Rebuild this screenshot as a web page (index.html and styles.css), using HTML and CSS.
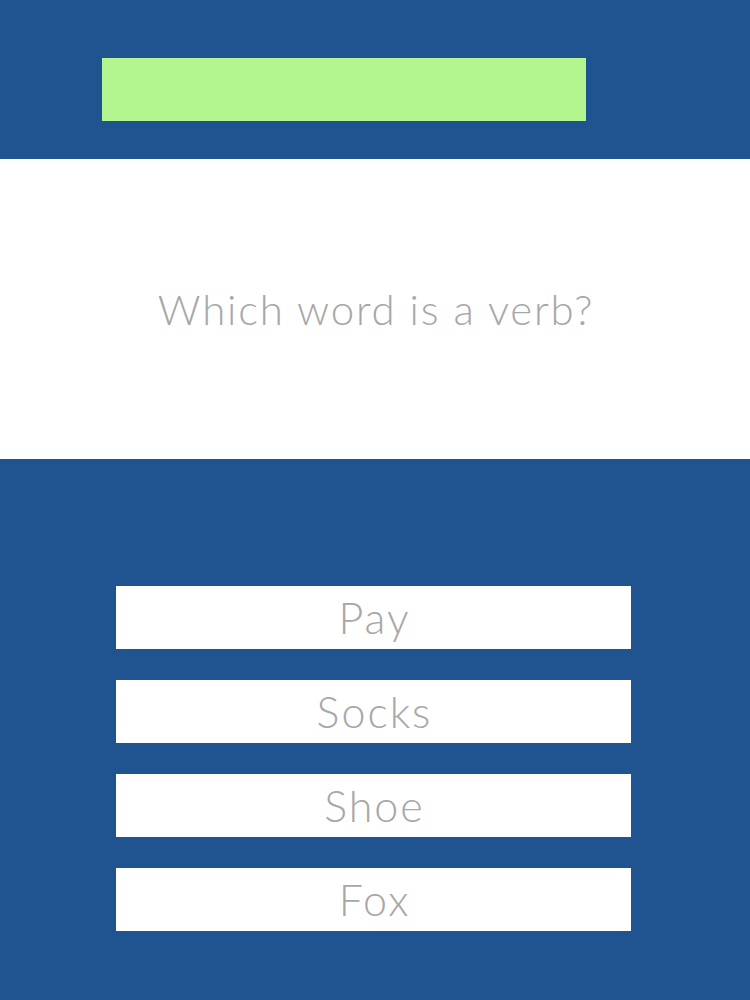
FILE: index.html
```html
<!DOCTYPE html>
<html>
<head>
<meta charset="utf-8">
<link rel="stylesheet" href="styles.css">
</head>
<body>
<header class="top">
  <div class="progress"></div>
</header>
<section class="question">
  <p class="question-text">Which word is a verb?</p>
</section>
<section class="answers">
  <div class="answer">Pay</div>
  <div class="answer">Socks</div>
  <div class="answer">Shoe</div>
  <div class="answer">Fox</div>
</section>
</body>
</html>
```
FILE: styles.css
```css
html, body {
  margin: 0;
  padding: 0;
}
body {
  width: 750px;
  height: 1000px;
  background: #1f5490;
  font-family: Lato, "Open Sans", sans-serif;
  font-weight: 300;
  overflow: hidden;
}
.top {
  height: 159px;
  box-sizing: border-box;
  padding: 58px 0 0 102px;
  background: #1f5490;
}
.progress {
  width: 484px;
  height: 63px;
  background: #b3f58f;
}
.question {
  height: 300px;
  background: #ffffff;
  display: flex;
  align-items: center;
  justify-content: center;
}
.question-text {
  margin: 0 0 0 2px;
  font-size: 42px;
  color: #a7a7a7;
  letter-spacing: 1.8px;
}
.answers {
  padding: 127px 0 0 116px;
  display: flex;
  flex-direction: column;
  gap: 31px;
}
.answer {
  width: 515px;
  height: 63px;
  box-sizing: border-box;
  padding-left: 2px;
  background: #ffffff;
  color: #a7a7a7;
  font-size: 43px;
  letter-spacing: 2px;
  display: flex;
  align-items: center;
  justify-content: center;
}
```
